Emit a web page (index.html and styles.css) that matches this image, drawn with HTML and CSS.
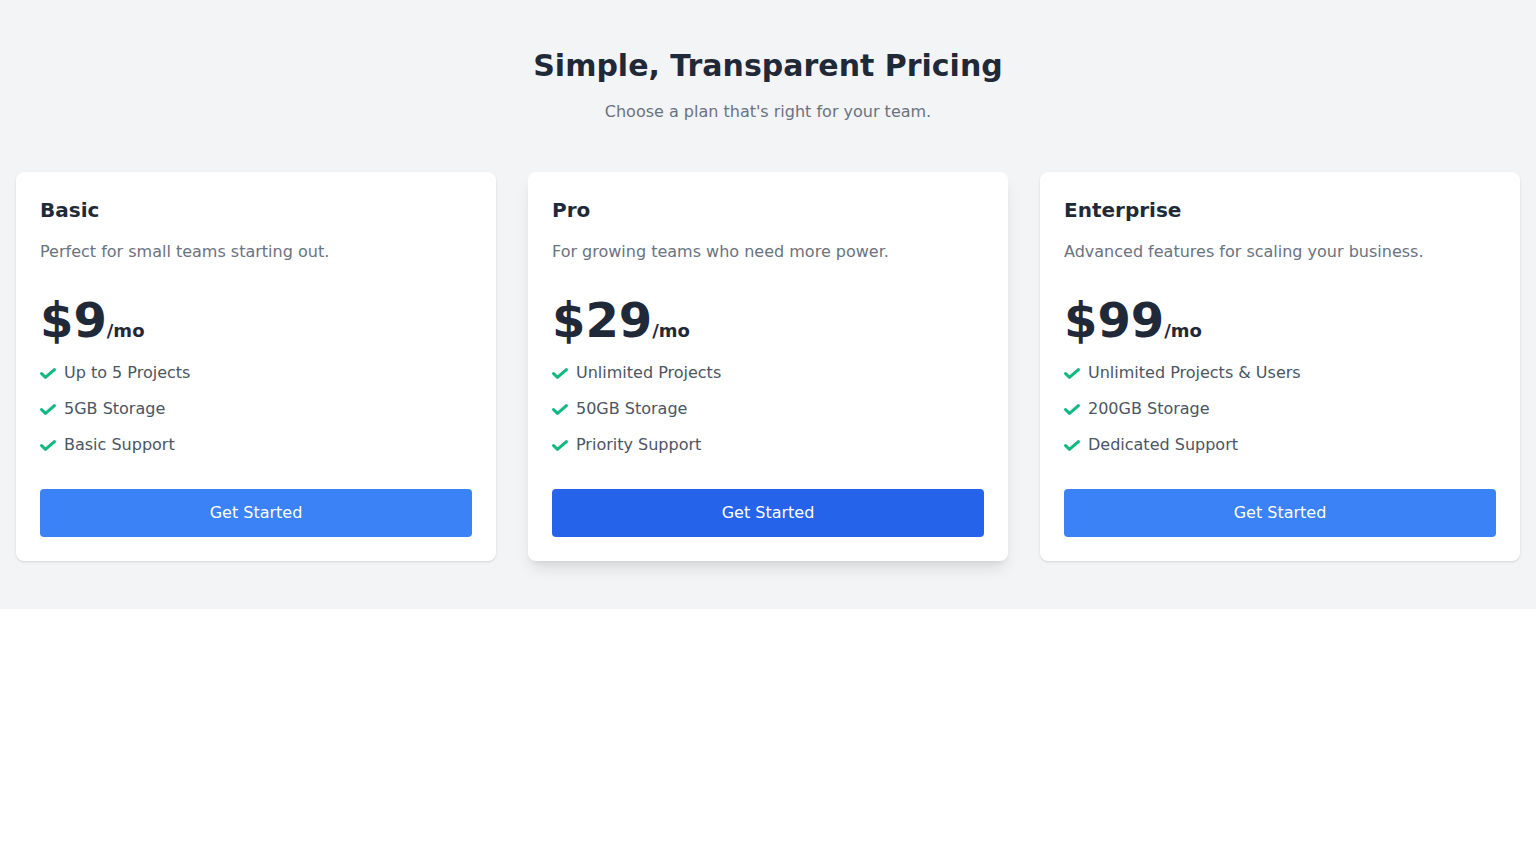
FILE: index.html
```html
<!DOCTYPE html>
<html lang="en">
<head>
<meta charset="utf-8">
<title>Pricing</title>
<link rel="stylesheet" href="styles.css">
</head>
<body>
<section class="pricing">
  <h1 class="title">Simple, Transparent Pricing</h1>
  <p class="subtitle">Choose a plan that's right for your team.</p>
  <div class="plans">
    <div class="card">
      <h2 class="plan-name">Basic</h2>
      <p class="plan-desc">Perfect for small teams starting out.</p>
      <div class="price"><span class="amount">$9</span><span class="per">/mo</span></div>
      <ul class="features">
        <li><svg class="check" viewBox="0 0 16 11"><path d="M1.6 5.6l3.9 3.8 8.9-7.8"/></svg>Up to 5 Projects</li>
        <li><svg class="check" viewBox="0 0 16 11"><path d="M1.6 5.6l3.9 3.8 8.9-7.8"/></svg>5GB Storage</li>
        <li><svg class="check" viewBox="0 0 16 11"><path d="M1.6 5.6l3.9 3.8 8.9-7.8"/></svg>Basic Support</li>
      </ul>
      <button class="btn">Get Started</button>
    </div>
    <div class="card card-featured">
      <h2 class="plan-name">Pro</h2>
      <p class="plan-desc">For growing teams who need more power.</p>
      <div class="price"><span class="amount">$29</span><span class="per">/mo</span></div>
      <ul class="features">
        <li><svg class="check" viewBox="0 0 16 11"><path d="M1.6 5.6l3.9 3.8 8.9-7.8"/></svg>Unlimited Projects</li>
        <li><svg class="check" viewBox="0 0 16 11"><path d="M1.6 5.6l3.9 3.8 8.9-7.8"/></svg>50GB Storage</li>
        <li><svg class="check" viewBox="0 0 16 11"><path d="M1.6 5.6l3.9 3.8 8.9-7.8"/></svg>Priority Support</li>
      </ul>
      <button class="btn btn-featured">Get Started</button>
    </div>
    <div class="card">
      <h2 class="plan-name">Enterprise</h2>
      <p class="plan-desc">Advanced features for scaling your business.</p>
      <div class="price"><span class="amount">$99</span><span class="per">/mo</span></div>
      <ul class="features">
        <li><svg class="check" viewBox="0 0 16 11"><path d="M1.6 5.6l3.9 3.8 8.9-7.8"/></svg>Unlimited Projects &amp; Users</li>
        <li><svg class="check" viewBox="0 0 16 11"><path d="M1.6 5.6l3.9 3.8 8.9-7.8"/></svg>200GB Storage</li>
        <li><svg class="check" viewBox="0 0 16 11"><path d="M1.6 5.6l3.9 3.8 8.9-7.8"/></svg>Dedicated Support</li>
      </ul>
      <button class="btn">Get Started</button>
    </div>
  </div>
</section>
</body>
</html>
```

FILE: styles.css
```css
* { box-sizing: border-box; }
html, body { margin: 0; padding: 0; }
body {
  font-family: "DejaVu Sans", sans-serif;
  background: #ffffff;
  color: #1f2937;
}
.pricing {
  background: #f3f4f6;
  padding: 48px 16px;
}
.title {
  margin: 0 0 16px;
  text-align: center;
  font-size: 30px;
  line-height: 36px;
  font-weight: 700;
  color: #1f2937;
}
.subtitle {
  margin: 0 0 48px;
  text-align: center;
  font-size: 16px;
  line-height: 24px;
  color: #6b7280;
}
.plans {
  display: grid;
  grid-template-columns: repeat(3, 1fr);
  gap: 32px;
}
.card {
  background: #ffffff;
  border-radius: 8px;
  padding: 24px;
  box-shadow: 0 1px 3px 0 rgba(0,0,0,0.1), 0 1px 2px -1px rgba(0,0,0,0.1);
}
.card-featured {
  box-shadow: 0 10px 15px -3px rgba(0,0,0,0.1), 0 4px 6px -4px rgba(0,0,0,0.1);
}
.plan-name {
  margin: 0 0 16px;
  font-size: 20px;
  line-height: 28px;
  font-weight: 700;
  color: #1f2937;
}
.plan-desc {
  margin: 0 0 32px;
  font-size: 16px;
  line-height: 24px;
  color: #6b7280;
}
.price {
  margin: 0 0 16px;
  line-height: 1;
  color: #1f2937;
}
.amount {
  font-size: 48px;
  font-weight: 700;
  line-height: 48px;
}
.per {
  font-size: 18px;
  font-weight: 700;
  line-height: 28px;
}
.features {
  list-style: none;
  margin: 0 0 32px;
  padding: 0;
  display: flex;
  flex-direction: column;
  gap: 12px;
}
.features li {
  display: flex;
  align-items: center;
  font-size: 16px;
  line-height: 24px;
  color: #4b5563;
}
.check {
  width: 16px;
  height: 11px;
  margin-right: 8px;
  fill: none;
  stroke: #10b981;
  stroke-width: 3;
  stroke-linecap: round;
  stroke-linejoin: round;
  flex: none;
}
.btn {
  display: block;
  width: 100%;
  border: 0;
  border-radius: 4px;
  padding: 12px 16px;
  background: #3b82f6;
  color: #ffffff;
  font-family: "DejaVu Sans", sans-serif;
  font-size: 16px;
  line-height: 24px;
  cursor: pointer;
}
.btn-featured {
  background: #2563eb;
}
```
